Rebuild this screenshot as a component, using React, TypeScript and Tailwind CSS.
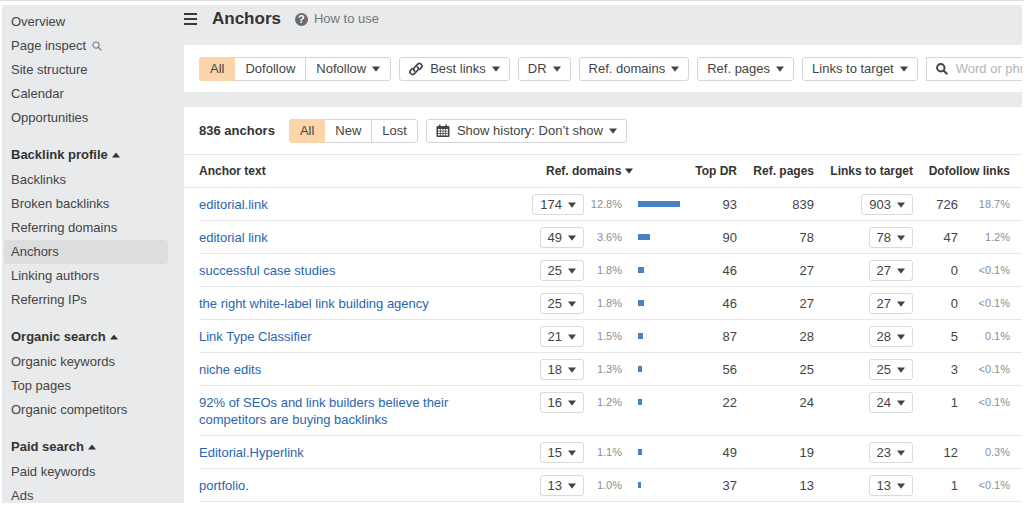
import { useState } from 'react';

interface AnchorRow {
  anchor: string;
  domains: number;
  domainsShare: string;
  topDr: number;
  pages: number;
  links: number;
  dofollow: number;
  dofollowShare: string;
}

const rows: AnchorRow[] = [
  { anchor: 'editorial.link', domains: 174, domainsShare: '12.8%', topDr: 93, pages: 839, links: 903, dofollow: 726, dofollowShare: '18.7%' },
  { anchor: 'editorial link', domains: 49, domainsShare: '3.6%', topDr: 90, pages: 78, links: 78, dofollow: 47, dofollowShare: '1.2%' },
  { anchor: 'successful case studies', domains: 25, domainsShare: '1.8%', topDr: 46, pages: 27, links: 27, dofollow: 0, dofollowShare: '<0.1%' },
  { anchor: 'the right white-label link building agency', domains: 25, domainsShare: '1.8%', topDr: 46, pages: 27, links: 27, dofollow: 0, dofollowShare: '<0.1%' },
  { anchor: 'Link Type Classifier', domains: 21, domainsShare: '1.5%', topDr: 87, pages: 28, links: 28, dofollow: 5, dofollowShare: '0.1%' },
  { anchor: 'niche edits', domains: 18, domainsShare: '1.3%', topDr: 56, pages: 25, links: 25, dofollow: 3, dofollowShare: '<0.1%' },
  { anchor: '92% of SEOs and link builders believe their competitors are buying backlinks', domains: 16, domainsShare: '1.2%', topDr: 22, pages: 24, links: 24, dofollow: 1, dofollowShare: '<0.1%' },
  { anchor: 'Editorial.Hyperlink', domains: 15, domainsShare: '1.1%', topDr: 49, pages: 19, links: 23, dofollow: 12, dofollowShare: '0.3%' },
  { anchor: 'portfolio.', domains: 13, domainsShare: '1.0%', topDr: 37, pages: 13, links: 13, dofollow: 1, dofollowShare: '<0.1%' },
];

const navGroups = [
  { title: null, items: ['Overview', 'Page inspect', 'Site structure', 'Calendar', 'Opportunities'] },
  { title: 'Backlink profile', items: ['Backlinks', 'Broken backlinks', 'Referring domains', 'Anchors', 'Linking authors', 'Referring IPs'] },
  { title: 'Organic search', items: ['Organic keywords', 'Top pages', 'Organic competitors'] },
  { title: 'Paid search', items: ['Paid keywords', 'Ads'] },
];

// Width of the bar for the row with the most referring domains
const MAX_BAR = 42;
const maxDomains = Math.max(...rows.map((r) => r.domains));

function Caret({ up = false }: { up?: boolean }) {
  return (
    <svg width="8" height="6" viewBox="0 0 8 6" fill="currentColor" className="shrink-0" aria-hidden="true">
      {up ? <path d="M4 0.5 8 5.5H0z" /> : <path d="M0 0.5h8L4 5.8z" />}
    </svg>
  );
}

function LinkIcon() {
  return (
    <svg width="14" height="14" viewBox="0 0 14 14" fill="none" stroke="currentColor" strokeWidth="1.7" strokeLinecap="round" aria-hidden="true">
      <path d="M5.6 9.2A2.6 2.6 0 0 1 5.5 5.5L8.6 2.3a2.5 2.5 0 0 1 3.6 3.5L10.7 7.3" />
      <path d="M8.4 4.8A2.6 2.6 0 0 1 8.5 8.5L5.4 11.7a2.5 2.5 0 0 1-3.6-3.5L3.3 6.7" />
    </svg>
  );
}

function CalendarIcon() {
  return (
    <svg width="14" height="14" viewBox="0 0 14 14" aria-hidden="true">
      <path
        fill="currentColor"
        fillRule="evenodd"
        d="M3 0.5h1.5V2h5V0.500H11V2h1.500A1 1 0 0 1 13.500 3v9a1 1 0 0 1-1 1h-11a1 1 0 0 1-1-1V3a1 1 0 0 1 1-1H3zM2 5v1.800h1.900V5zm2.700 0v1.800h1.900V5zm2.700 0v1.800h1.900V5zm2.700 0v1.800H12V5zM2 7.500v1.700h1.900V7.500zm2.700 0v1.700h1.900V7.500zm2.700 0v1.700h1.900V7.500zm2.700 0v1.700H12V7.500zM2 9.900v1.600h1.900V9.900zm2.700 0v1.600h1.900V9.900zm2.700 0v1.600h1.900V9.900zm2.700 0v1.600H12V9.900z"
      />
    </svg>
  );
}

function SearchIcon({ size, weight }: { size: number; weight: number }) {
  return (
    <svg width={size} height={size} viewBox="0 0 12 12" fill="none" stroke="currentColor" strokeWidth={weight} aria-hidden="true">
      <circle cx="4.8" cy="4.8" r="3.7" />
      <path d="M7.5 7.5 11.3 11.3" />
    </svg>
  );
}

function Dropdown({ label, icon }: { label: string; icon?: React.ReactNode }) {
  return (
    <button
      type="button"
      className="flex h-6 shrink-0 items-center gap-1.5 rounded-[3px] border border-[#d3d5d8] bg-white px-[9px] whitespace-nowrap"
    >
      {icon && <span className="mr-px">{icon}</span>}
      {label}
      <Caret />
    </button>
  );
}

function CountButton({ value, label }: { value: number; label: string }) {
  return (
    <button
      type="button"
      aria-label={`${value} ${label}`}
      className="inline-flex h-[21px] items-center gap-1.5 rounded-[3px] border border-[#d8dadc] bg-white px-[7px] align-top"
    >
      {value}
      <Caret />
    </button>
  );
}

interface SegmentedProps {
  options: string[];
  value: string;
  onChange: (value: string) => void;
  menuOption?: string;
}

function Segmented({ options, value, onChange, menuOption }: SegmentedProps) {
  return (
    <div className="flex h-6 shrink-0">
      {options.map((option) => (
        <button
          key={option}
          type="button"
          aria-pressed={option === value}
          onClick={() => onChange(option)}
          className={`
            -ml-px flex items-center gap-1.5 border px-2.5 whitespace-nowrap
            first:ml-0 first:rounded-l-[3px] last:rounded-r-[3px]
            ${option === value ? 'relative border-[#fbd3a8] bg-[#fdd5ab]' : 'border-[#d3d5d8] bg-white'}
          `}
        >
          {option}
          {option === menuOption && <Caret />}
        </button>
      ))}
    </div>
  );
}

function Sidebar() {
  return (
    <nav className="w-[182px] shrink-0 overflow-hidden pt-[5px] pr-4 pl-0.5 leading-6">
      {navGroups.map((group) => (
        <section key={group.title ?? 'main'} className="mb-[13px]">
          {group.title && (
            <button type="button" className="mb-px flex items-center gap-1 pl-[7px] font-bold text-[#333]">
              {group.title}
              <Caret up />
            </button>
          )}
          <ul>
            {group.items.map((item) => (
              <li key={item}>
                <a
                  href="#"
                  aria-current={item === 'Anchors' ? 'page' : undefined}
                  className={`flex items-center gap-1.5 rounded-sm pl-[7px] ${item === 'Anchors' ? 'bg-[#dcdddf]' : ''}`}
                >
                  {item}
                  {item === 'Page inspect' && (
                    <span className="text-[#777]">
                      <SearchIcon size={10} weight={1.3} />
                    </span>
                  )}
                </a>
              </li>
            ))}
          </ul>
        </section>
      ))}
    </nav>
  );
}

function AnchorsTable() {
  return (
    <table className="w-full table-fixed border-separate border-spacing-0 text-right leading-[17px]">
      <colgroup>
        <col className="w-[15px]" />
        <col />
        <col className="w-16" />
        <col className="w-[38px]" />
        <col className="w-[70px]" />
        <col className="w-[45px]" />
        <col className="w-[77px]" />
        <col className="w-[99px]" />
        <col className="w-[45px]" />
        <col className="w-16" />
      </colgroup>
      <thead>
        <tr className="h-[33px] text-xs whitespace-nowrap text-[#333] [&>*]:border-b [&>*]:border-[#e6e7e9]">
          <td></td>
          <th scope="col" className="text-left">Anchor text</th>
          <th scope="col" colSpan={3} aria-sort="descending" className="pl-[26px]">
            <button type="button" className="flex items-center gap-1 font-bold">
              Ref. domains
              <Caret />
            </button>
          </th>
          <th scope="col">Top DR</th>
          <th scope="col">Ref. pages</th>
          <th scope="col">Links to target</th>
          <th scope="col" colSpan={2} className="pr-3">Dofollow links</th>
        </tr>
      </thead>
      <tbody>
        {rows.map((row) => (
          <tr key={row.anchor} className="align-top [&>td]:pt-2 [&>td]:pb-[7px] [&>td+td]:border-b [&>td+td]:border-[#e6e7e9]">
            <td></td>
            <td className="pr-10 text-left">
              <a href="#" className="text-[#2a65b0]">{row.anchor}</a>
            </td>
            <td>
              <div className="-my-0.5">
                <CountButton value={row.domains} label="referring domains" />
              </div>
            </td>
            <td className="text-[11px] text-[#8a8f96]">{row.domainsShare}</td>
            <td className="pl-4">
              <div className="mt-[5px] h-1.5 bg-[#4a80c4]" style={{ width: Math.round((row.domains / maxDomains) * MAX_BAR) }} />
            </td>
            <td>{row.topDr}</td>
            <td>{row.pages}</td>
            <td>
              <div className="-my-0.5">
                <CountButton value={row.links} label="links to target" />
              </div>
            </td>
            <td>{row.dofollow}</td>
            <td className="pr-3 text-[11px] text-[#8a8f96]">{row.dofollowShare}</td>
          </tr>
        ))}
      </tbody>
    </table>
  );
}

export default function App() {
  const [follow, setFollow] = useState('All');
  const [status, setStatus] = useState('All');

  return (
    <div className="flex h-screen flex-col overflow-hidden border-t border-[#dcdcdc] bg-white px-0.5 pt-1 pb-[3px] font-['Liberation_Sans',Arial,sans-serif] text-[13px] text-[#444]">
      <div className="flex min-h-0 flex-1 bg-[#e9eaec]">
        <Sidebar />
        <main className="flex min-w-0 flex-1 flex-col overflow-hidden">
          <header className="flex h-10 shrink-0 items-center pb-3">
            <button type="button" aria-label="Toggle menu" className="flex w-[13px] flex-col gap-[3px]">
              <span className="h-0.5 bg-[#3a3a3a]" />
              <span className="h-0.5 bg-[#3a3a3a]" />
              <span className="h-0.5 bg-[#3a3a3a]" />
            </button>
            <h1 className="ml-[15px] text-[17px] leading-6 font-bold text-[#333]">Anchors</h1>
            <a href="#" className="ml-3.5 flex items-center gap-1.5 text-[#777]">
              <span className="flex size-[13px] items-center justify-center rounded-full bg-[#6b6b6b] text-[11px] leading-none font-bold text-white">
                ?
              </span>
              How to use
            </a>
          </header>

          <div className="flex h-[47px] shrink-0 items-center gap-2 overflow-hidden bg-white pl-[15px]">
            <Segmented options={['All', 'Dofollow', 'Nofollow']} value={follow} onChange={setFollow} menuOption="Nofollow" />
            <Dropdown label="Best links" icon={<LinkIcon />} />
            <Dropdown label="DR" />
            <Dropdown label="Ref. domains" />
            <Dropdown label="Ref. pages" />
            <Dropdown label="Links to target" />
            <label className="flex h-6 min-w-0 flex-1 items-center gap-2 border border-r-0 border-[#d3d5d8] pl-[9px]">
              <SearchIcon size={12} weight={2} />
              <input
                type="text"
                aria-label="Word or phrase"
                placeholder="Word or phrase"
                className="min-w-0 flex-1 outline-none placeholder:text-[#b0b5bb]"
              />
            </label>
          </div>

          <section className="mt-[15px] flex-1 bg-white">
            <div className="flex h-12 items-center gap-2 border-b border-[#e6e7e9] pl-[15px]">
              <h2 className="mr-1.5 font-bold text-[#333]">836 anchors</h2>
              <Segmented options={['All', 'New', 'Lost']} value={status} onChange={setStatus} />
              <Dropdown label="Show history: Don’t show" icon={<CalendarIcon />} />
            </div>
            <AnchorsTable />
          </section>
        </main>
      </div>
    </div>
  );
}
